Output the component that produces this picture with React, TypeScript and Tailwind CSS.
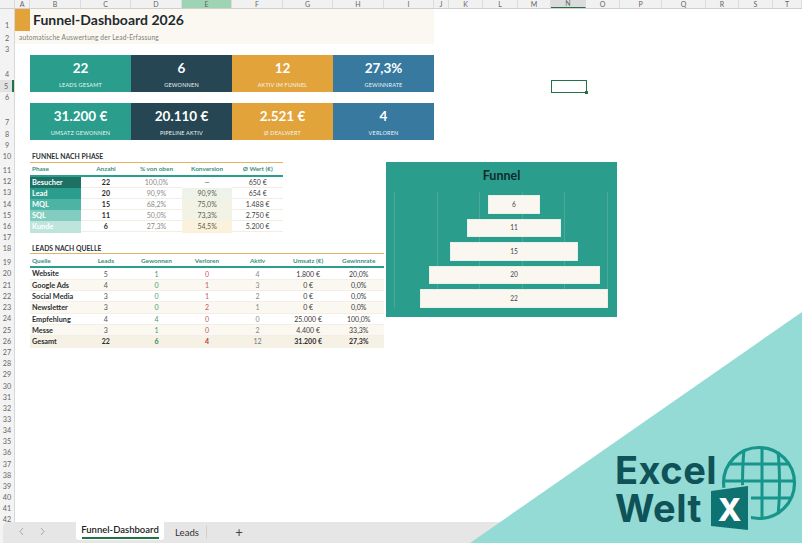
const cols: [string, string, string?][] = [
  ["A", "w-[15px]"], ["B", "w-[51px]"], ["C", "w-[50px]"], ["D", "w-[51px]"], ["E", "w-[50px]", "e"],
  ["F", "w-[51px]"], ["G", "w-[50px]"], ["H", "w-[51px]"], ["I", "w-[50px]"], ["J", "w-[15px]"],
  ["K", "w-[34px]"], ["L", "w-[35px]"], ["M", "w-[33px]"], ["N", "w-[35px]", "n"], ["O", "w-[34px]"],
  ["P", "w-[42px]"], ["Q", "w-[44px]"], ["R", "w-[33px]"], ["S", "w-[34px]"], ["T", "w-[29px]"],
];

const rowNums: [number, string][] = [
  [1, "h-[22px]"], [2, "h-[13px]"], [3, "h-[11px]"], [4, "h-[25px]"], [5, "h-[12px]"], [6, "h-[11px]"],
  [7, "h-[25px]"], [8, "h-[12px]"], [9, "h-[11px]"], [10, "h-[11px]"], [11, "h-[14px]"],
  [12, "h-[11.2px]"], [13, "h-[11.2px]"], [14, "h-[11.2px]"], [15, "h-[11.2px]"], [16, "h-[11.2px]"],
  [17, "h-[11px]"], [18, "h-[11px]"], [19, "h-[14px]"],
  [20, "h-[11.3px]"], [21, "h-[11.3px]"], [22, "h-[11.3px]"], [23, "h-[11.3px]"], [24, "h-[11.3px]"], [25, "h-[11.3px]"], [26, "h-[11.3px]"],
  ...Array.from({ length: 16 }, (_, i) => [27 + i, "h-[11.15px]"] as [number, string]),
];

const kpi1 = [
  ["22", "LEADS GESAMT", "bg-[#2a9d8c]"],
  ["6", "GEWONNEN", "bg-[#264653]"],
  ["12", "AKTIV IM FUNNEL", "bg-[#e3a33b]"],
  ["27,3%", "GEWINNRATE", "bg-[#37799f]"],
];
const kpi2 = [
  ["31.200 €", "UMSATZ GEWONNEN", "bg-[#2a9d8c]"],
  ["20.110 €", "PIPELINE AKTIV", "bg-[#264653]"],
  ["2.521 €", "Ø DEALWERT", "bg-[#e3a33b]"],
  ["4", "VERLOREN", "bg-[#37799f]"],
];

const funnel = [
  ["Besucher", "22", "100,0%", "—", "650 €", "bg-[#1c7064]", "bg-white"],
  ["Lead", "20", "90,9%", "90,9%", "654 €", "bg-[#2a9d8c]", "bg-[#eef3e9]"],
  ["MQL", "15", "68,2%", "75,0%", "1.488 €", "bg-[#4db3a4]", "bg-[#f2f3e5]"],
  ["SQL", "11", "50,0%", "73,3%", "2.750 €", "bg-[#82cdbf]", "bg-[#f2f3e5]"],
  ["Kunde", "6", "27,3%", "54,5%", "5.200 €", "bg-[#bde5db]", "bg-[#fcf1da]"],
];

const sources = [
  ["Website", "5", "1", "0", "4", "1.800 €", "20,0%"],
  ["Google Ads", "4", "0", "1", "3", "0 €", "0,0%"],
  ["Social Media", "3", "0", "1", "2", "0 €", "0,0%"],
  ["Newsletter", "3", "0", "2", "1", "0 €", "0,0%"],
  ["Empfehlung", "4", "4", "0", "0", "25.000 €", "100,0%"],
  ["Messe", "3", "1", "0", "2", "4.400 €", "33,3%"],
];

const bars = [
  ["6", "w-[52px] h-[18.5px]"],
  ["11", "w-[94px] h-[18.5px]"],
  ["15", "w-[128px] h-[18.5px]"],
  ["20", "w-[171px] h-[18.5px]"],
  ["22", "w-[188px] h-[18.5px]"],
];

function Kpi({ items }: { items: string[][] }) {
  return (
    <div className="ml-[15px] grid h-[37px] w-[404px] grid-cols-4">
      {items.map(([v, l, c]) => (
        <div key={l} className={`flex flex-col items-center text-white ${c}`}>
          <div className="flex h-[25px] items-center pt-[2px] text-[13.5px] leading-none font-bold">{v}</div>
          <div className="flex h-[12px] items-center pb-[1px] text-[5.5px] leading-none tracking-[0.2px] text-[#eef5f3]">{l}</div>
        </div>
      ))}
    </div>
  );
}

export default function App() {
  return (
    <div className="relative flex h-[543px] w-[802px] flex-col overflow-hidden bg-white font-['Lato','Open_Sans',sans-serif]">
      {/* Column headers */}
      <div className="flex h-[9px] shrink-0 border-b border-[#cfcfcf] bg-[#f1f1f1]">
        <div className="w-[15px] shrink-0 border-r border-[#d8d8d8]" />
        {cols.map(([c, w, k]) => (
          <div
            key={c}
            className={`flex shrink-0 items-center justify-center border-r border-[#dcdcdc] text-[7px] leading-none text-[#666] ${w} ${
              k === "e" ? "bg-[#9ed3b4] text-[#2c6b47]" : k === "n" ? "border-b border-b-[#217346] bg-[#dcdcdc]" : ""
            }`}
          >
            {c}
          </div>
        ))}
      </div>

      <div className="flex min-h-0 flex-1">
        {/* Row numbers */}
        <div className="w-[15px] shrink-0 overflow-hidden border-r border-[#d8d8d8] bg-[#f3f3f3]">
          {rowNums.map(([n, h]) => (
            <div
              key={n}
              className={`flex items-end justify-center pb-[1px] text-[7.2px] leading-[9px] text-[#666] ${h} ${
                n === 5 ? "border-r-2 border-r-[#217346] bg-[#e2e2e2]" : ""
              }`}
            >
              {n}
            </div>
          ))}
        </div>

        {/* Sheet */}
        <div className="min-w-0 flex-1">
          <div className="w-[419px] bg-[#fbf8f1]">
            <div className="flex h-[22px]">
              <div className="w-[15px] bg-[#e3a33b]" />
              <div className="flex items-center pl-[3px] text-[14px] leading-none font-bold text-[#1f2a30]">Funnel-Dashboard 2026</div>
            </div>
            <div className="flex h-[13px] items-center pl-[4px] text-[6.6px] leading-none tracking-[0.18px] text-[#7d7d78]">
              automatische Auswertung der Lead-Erfassung
            </div>
          </div>

          <div className="pt-[11px]"><Kpi items={kpi1} /></div>
          <div className="pt-[11px]"><Kpi items={kpi2} /></div>

          {/* Funnel table */}
          <div className="ml-[15px] w-[253px] pt-[11px]">
            <div className="flex h-[11.5px] items-center border-b border-[#e3b468] pl-[2px] text-[6.8px] leading-none font-bold text-[#2b3338]">FUNNEL NACH PHASE</div>
            <div className="grid h-[14px] grid-cols-5 items-center border-b-2 border-[#2a9d8c] text-center text-[6.4px] font-bold text-[#3c8f84]">
              <div className="pl-[2px] text-left">Phase</div>
              <div>Anzahl</div>
              <div>% von oben</div>
              <div>Konversion</div>
              <div>Ø Wert (€)</div>
            </div>
            {funnel.map(([p, a, v, k, w, bg, kb]) => (
              <div key={p} className="grid h-[11.2px] grid-cols-5 items-stretch border-b border-[#f2eee4] text-center text-[7px] leading-[11.5px]">
                <div className={`pl-[2px] text-left text-[7.4px] font-bold text-white ${bg}`}>{p}</div>
                <div className="font-bold text-[#26292b]">{a}</div>
                <div className="text-[#8b8b8b]">{v}</div>
                <div className={`text-[#5d5d55] ${kb}`}>{k}</div>
                <div className="text-[#444]">{w}</div>
              </div>
            ))}
          </div>

          {/* Source table */}
          <div className="ml-[15px] w-[354px] pt-[11px]">
            <div className="flex h-[11px] items-center border-b border-[#e3b468] pl-[2px] text-[6.8px] leading-none font-bold text-[#2b3338]">LEADS NACH QUELLE</div>
            <div className="grid h-[14px] grid-cols-7 items-center border-b-2 border-[#2a9d8c] pt-[1px] text-center text-[6.4px] font-bold text-[#3c8f84]">
              <div className="pl-[2px] text-left">Quelle</div>
              <div>Leads</div>
              <div>Gewonnen</div>
              <div>Verloren</div>
              <div>Aktiv</div>
              <div>Umsatz (€)</div>
              <div>Gewinnrate</div>
            </div>
            {sources.map(([q, l, g, v, a, u, r], i) => (
              <div key={q} className={`grid h-[11.3px] grid-cols-7 items-center border-b border-[#f3efe6] pt-[1px] text-center text-[7px] leading-none ${i % 2 ? "bg-[#fbf8f1]" : "bg-white"}`}>
                <div className="pl-[2px] text-left text-[7.3px] font-bold text-[#2b3033]">{q}</div>
                <div className="text-[#555]">{l}</div>
                <div className="text-[#4b9a68]">{g}</div>
                <div className="text-[#c05c68]">{v}</div>
                <div className="text-[#888]">{a}</div>
                <div className="text-[#3a3a3a]">{u}</div>
                <div className="text-[#3a3a3a]">{r}</div>
              </div>
            ))}
            <div className="grid h-[11.3px] grid-cols-7 items-center bg-[#f6f1e5] text-center text-[7px] leading-none font-bold text-[#2f2f2f]">
              <div className="pl-[2px] text-left text-[7.3px]">Gesamt</div>
              <div>22</div>
              <div className="text-[#2f8a4f]">6</div>
              <div className="text-[#b93e4c]">4</div>
              <div className="font-normal text-[#777]">12</div>
              <div>31.200 €</div>
              <div>27,3%</div>
            </div>
          </div>
        </div>
      </div>

      {/* Sheet tabs */}
      <div className="flex h-[21px] shrink-0 bg-[#f3f3f3]">
        <div className="ml-[3px] flex flex-1 items-start rounded-tl-[5px] bg-[#e6e6e6] pl-[73px]">
          <div className="flex h-[18px] w-[88px] flex-col items-center rounded-b-[3px] bg-white">
            <div className="flex h-[15px] items-center text-[9.5px] leading-none font-semibold text-[#222]">Funnel-Dashboard</div>
            <div className="h-[1.5px] w-[77px] bg-[#217346]" />
          </div>
          <div className="flex h-[21px] w-[42px] items-center justify-center pl-[4px] text-[9.6px] leading-none text-[#333]">Leads</div>
          <div className="mt-[4px] h-[12px] w-px bg-[#cfcfcf]" />
          <div className="flex h-[21px] w-[64px] items-center justify-center text-[13px] leading-none text-[#444]">+</div>
        </div>
      </div>
      <svg className="absolute bottom-[7px] left-[17px]" width="30" height="9" viewBox="0 0 30 9" fill="none" stroke="#a8a8a8" strokeWidth="1">
        <path d="M6 1 3 4.5 6 8" />
        <path d="M24 1 27 4.5 24 8" />
      </svg>

      {/* Selected cell N5 */}
      <div className="absolute top-[79.5px] left-[551px] h-[13.5px] w-[36px] border-[1.5px] border-[#217346]">
        <div className="absolute -right-[2px] -bottom-[2px] h-[3.5px] w-[3.5px] bg-[#217346]" />
      </div>

      {/* Floating chart */}
      <div className="absolute top-[162px] left-[386px] h-[155px] w-[231px] overflow-hidden bg-[#2a9d8c]">
        <div className="absolute top-[30px] left-[8px] flex h-[116px] w-[214px] justify-between">
          {[0, 1, 2, 3, 4, 5].map((i) => (
            <div key={i} className="h-full w-px bg-[#4aa99b]" />
          ))}
        </div>
        <div className="flex h-[28px] items-center justify-center pt-[1px] text-[12.5px] leading-none font-bold text-[#102a2e]">Funnel</div>
        <div className="relative ml-[34px] flex w-[188px] flex-col items-center gap-[5px] pt-[5px]">
          {bars.map(([n, c]) => (
            <div key={n} className={`flex items-center justify-center border border-[#e6f1ea] bg-[#faf7f1] text-[6.6px] leading-none text-[#444] ${c}`}>{n}</div>
          ))}
        </div>
      </div>

      {/* Brand overlay */}
      <div className="pointer-events-none absolute inset-0">
        <svg className="absolute inset-0" width="802" height="543" viewBox="0 0 802 543">
          <polygon points="802,312 802,543 470,543" fill="#94dbd5" />
        </svg>
        <div className="absolute top-[451px] left-[615px] font-['Inter','Liberation_Sans',sans-serif] text-[38px] leading-[38px] font-bold tracking-[0.5px] text-[#0f5257]">
          <div>Excel</div>
          <div>Welt</div>
        </div>
        <svg className="absolute top-[440px] left-[705px]" width="95" height="95" viewBox="0 0 95 95" fill="none">
          <g stroke="#17958b" strokeWidth="3">
            <circle cx="54" cy="43" r="35.5" strokeWidth="3.2" />
            <path d="M39 10C37 30 37 60 39 77" />
            <path d="M57 7V79" />
            <path d="M73 12C75 30 75 58 73 74" />
            <path d="M23 24H85" />
            <path d="M19 41H89" />
            <path d="M22 58H86" />
          </g>
          <polygon points="3,50 46,44 46,92 3,89" fill="#94dbd5" />
          <polygon points="6,51 43,46 43,90 6,86" fill="#0d7270" />
        </svg>
        <div className="absolute top-[493px] left-[713px] flex h-[32px] w-[33px] items-center justify-center font-['Inter','Liberation_Sans',sans-serif] text-[31px] leading-none font-extrabold text-white">X</div>
      </div>
    </div>
  );
}
